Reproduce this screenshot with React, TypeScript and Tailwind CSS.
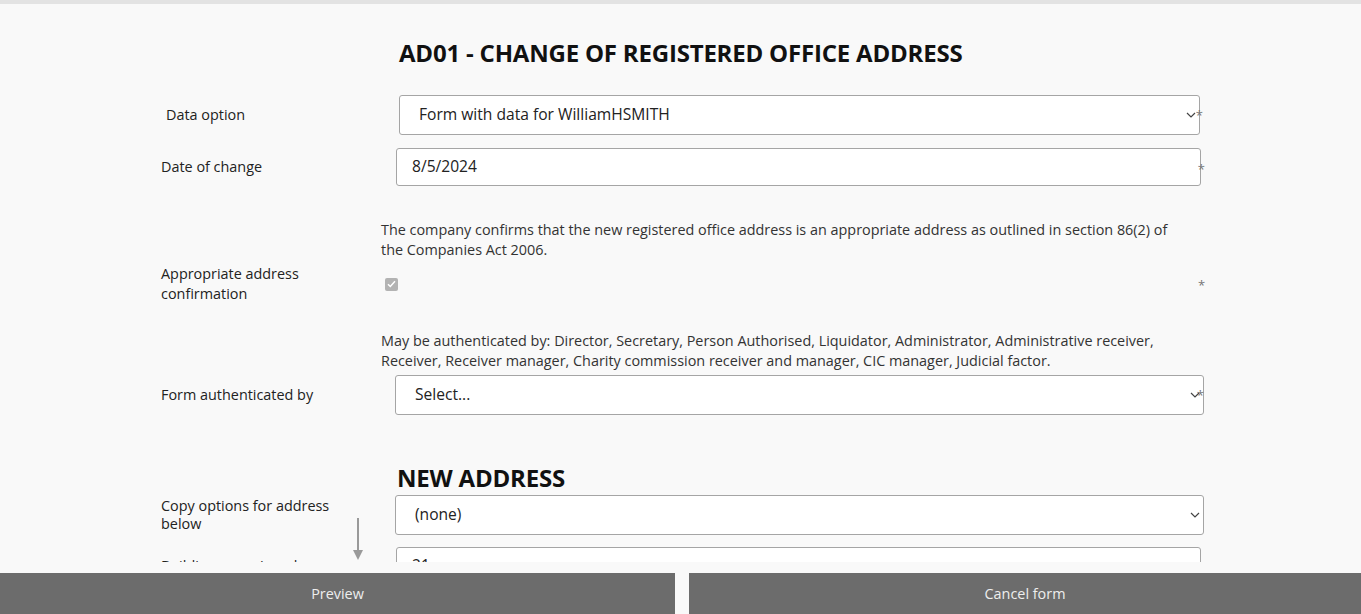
import React from 'react'

const font = { fontFamily: '"Open Sans", "Noto Sans", sans-serif' }

function Chevron() {
  return (
    <svg width="10" height="6" viewBox="0 0 10 6" className="absolute right-[3px] top-1/2 -translate-y-1/2">
      <path d="M1 1l4 4 4-4" fill="none" stroke="#444" strokeWidth="1.2" />
    </svg>
  )
}

function Star({ className = '' }: { className?: string }) {
  return <span className={`absolute text-[13px] leading-none text-[#777] ${className}`}>*</span>
}

function Row({ label, children, className = '' }: { label: React.ReactNode; children: React.ReactNode; className?: string }) {
  return (
    <div className={`grid grid-cols-[220px_824px] items-center ${className}`}>
      <div className="text-[14.4px] leading-[20px] text-[#222]">{label}</div>
      <div>{children}</div>
    </div>
  )
}

export default function App() {
  return (
    <div className="h-[614px] w-[1361px] overflow-hidden bg-[#f9f9f9]" style={font}>
      <div className="h-[4px] bg-[#e3e3e3]" />
      <div className="relative h-[558px] overflow-hidden pl-[161px]">
        <h1 className="ml-[238px] mt-[34px] text-[24px] font-bold leading-[30px] tracking-[-0.2px] text-[#111]">
          AD01 - CHANGE OF REGISTERED OFFICE ADDRESS
        </h1>

        <Row label={<span className="pl-[5px]">Data option</span>} className="mt-[27px]">
          <div className="relative ml-[18px] flex h-[40px] w-[801px] items-center rounded-[3px] border border-[#a5a5a5] bg-white pl-[19px] text-[15.6px] text-[#222]">
            Form with data for WilliamHSMITH
            <Chevron />
            <Star className="right-[-4px] top-[13px]" />
          </div>
        </Row>

        <Row label="Date of change" className="mt-[13px]">
          <div className="relative ml-[15px] flex h-[38px] w-[805px] items-center rounded-[3px] border border-[#a5a5a5] bg-white pl-[15px] text-[15.6px] text-[#222]">
            8/5/2024
            <Star className="right-[-5px] top-[14px]" />
          </div>
        </Row>

        <div className="ml-[220px] mt-[34px] w-[800px] text-[14.4px] leading-[20px] text-[#333]">
          The company confirms that the new registered office address is an appropriate address as outlined in section 86(2) of the Companies Act 2006.
        </div>
        <Row
          className="mt-[4px]"
          label={
            <>
              Appropriate address
              <br />
              confirmation
            </>
          }
        >
          <div className="relative flex h-[40px] w-[824px] items-center">
            <span className="ml-[4px] flex h-[13px] w-[13px] items-center justify-center rounded-[2px] bg-[#b3b3b3]">
              <svg width="9" height="8" viewBox="0 0 9 8">
                <path d="M1 4.2l2.3 2.3L8 1.2" fill="none" stroke="#fff" strokeWidth="1.5" />
              </svg>
            </span>
            <Star className="left-[817px] top-[15px]" />
          </div>
        </Row>

        <div className="ml-[220px] mt-[27px] w-[800px] text-[14.4px] leading-[20px] text-[#333]">
          May be authenticated by: Director, Secretary, Person Authorised, Liquidator, Administrator, Administrative receiver, Receiver, Receiver manager, Charity commission receiver and manager, CIC manager, Judicial factor.
        </div>
        <Row label="Form authenticated by" className="mt-[4px]">
          <div className="relative ml-[14px] flex h-[40px] w-[809px] items-center rounded-[3px] border border-[#a5a5a5] bg-white pl-[19px] text-[15.6px] text-[#222]">
            Select...
            <Chevron />
            <Star className="right-[-1px] top-[13px]" />
          </div>
        </Row>

        <h2 className="ml-[236px] mt-[48px] text-[24px] font-bold leading-[30px] tracking-[-0.2px] text-[#111]">NEW ADDRESS</h2>

        <Row
          className="mt-[2px]"
          label={
            <div className="leading-[18px]">
              Copy options for address
              <br />
              below
            </div>
          }
        >
          <div className="relative ml-[14px] flex h-[40px] w-[809px] items-center rounded-[3px] border border-[#a5a5a5] bg-white pl-[19px] text-[15.6px] text-[#222]">
            (none)
            <Chevron />
          </div>
        </Row>

        <Row label="Building name/number" className="mt-[12px]">
          <div className="relative ml-[15px] flex h-[38px] w-[805px] items-center rounded-[3px] border border-[#a5a5a5] bg-white pl-[15px] text-[15.6px] text-[#222]">
            21
          </div>
        </Row>

        <svg width="12" height="44" viewBox="0 0 12 44" className="absolute left-[352px] top-[514px]">
          <path d="M6 0v34" stroke="#9a9a9a" strokeWidth="2" />
          <path d="M1 32l5 10 5-10z" fill="#9a9a9a" />
        </svg>
      </div>

      <div className="grid grid-cols-[675px_1fr] gap-[14px] pt-[11px]">
        <button className="h-[41px] bg-[#6c6c6c] text-[14.4px] text-[#eee]">Preview</button>
        <button className="h-[41px] bg-[#6c6c6c] text-[14.4px] text-[#eee]">Cancel form</button>
      </div>
    </div>
  )
}
